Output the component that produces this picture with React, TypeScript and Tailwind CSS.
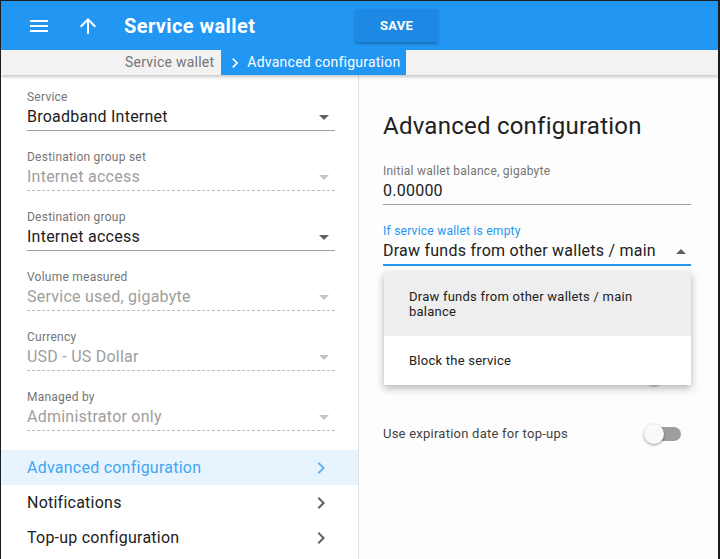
import React from "react";

const Caret = ({ up = false, color = "#757575" }: { up?: boolean; color?: string }) => (
  <svg width="10" height="5" viewBox="0 0 10 5" className="shrink-0">
    {up ? <path d="M0 5 L5 0 L10 5 Z" fill={color} /> : <path d="M0 0 L10 0 L5 5 Z" fill={color} />}
  </svg>
);

const Chevron = ({ color }: { color: string }) => (
  <svg width="24" height="24" viewBox="0 0 24 24" className="shrink-0">
    <path d="M8.59 16.59L13.17 12 8.59 7.41 10 6l6 6-6 6-1.41-1.41z" fill={color} />
  </svg>
);

type FieldProps = { label: string; value: string; disabled?: boolean };

const Field = ({ label, value, disabled }: FieldProps) => (
  <div className="mb-[19px]">
    <div className="h-[14px] text-[12px] leading-[14px] text-[#757575]">{label}</div>
    <div
      className={
        "mt-[3px] flex h-[20px] items-center justify-between pr-[6px] pb-[3px] box-content border-b " +
        (disabled ? "border-dashed border-[#bdbdbd]" : "border-solid border-[#9e9e9e]")
      }
    >
      <span className={"text-[16px] leading-[20px] " + (disabled ? "text-[#9e9e9e]" : "text-[#212121]")}>{value}</span>
      <Caret color={disabled ? "#c4c4c4" : "#616161"} />
    </div>
  </div>
);

const Toggle = () => (
  <div className="relative h-[20px] w-[38px] shrink-0">
    <div className="absolute left-[5px] top-[3px] h-[14px] w-[32px] rounded-full bg-[#9e9e9e]" />
    <div className="absolute left-0 top-0 h-[20px] w-[20px] rounded-full bg-[#fafafa] shadow-[0_1px_3px_rgba(0,0,0,0.4)]" />
  </div>
);

export default function App() {
  return (
    <div
      className="h-[559px] w-[720px] overflow-hidden bg-[#1c1d1f] pl-px pr-[2px] pt-px tracking-[0.015em]"
      style={{ fontFamily: "Roboto, 'Noto Sans', sans-serif" }}
    >
      <div className="flex h-full flex-col bg-white">
        {/* Header */}
        <div className="flex h-[49px] shrink-0 items-center bg-[#2196f3] pl-[26px]">
          <svg width="24" height="24" viewBox="0 0 24 24">
            <path d="M3 18h18v-2H3v2zm0-5h18v-2H3v2zm0-7v2h18V6H3z" fill="#fff" />
          </svg>
          <svg width="24" height="24" viewBox="0 0 24 24" className="ml-[25px]">
            <path d="M4 12l1.41 1.41L11 7.83V20h2V7.83l5.58 5.59L20 12l-8-8-8 8z" fill="#fff" />
          </svg>
          <div className="ml-[24px] w-[231px] text-[20px] font-bold leading-[24px] tracking-[0.02em] text-white">Service wallet</div>
          <button className="flex h-[33px] w-[83px] items-center justify-center rounded-[2px] bg-[#1e88e5] text-[13px] font-bold tracking-[0.3px] text-white shadow-[0_2px_3px_rgba(0,0,0,0.25)]">
            SAVE
          </button>
        </div>

        {/* Breadcrumb */}
        <div className="relative z-10 flex h-[25px] shrink-0 items-stretch bg-[#f2f2f2] pl-[124px] shadow-[0_2px_3px_rgba(0,0,0,0.22)]">
          <span className="flex items-center text-[14px] text-[#757575]">Service wallet</span>
          <div className="ml-[7px] flex items-center bg-[#2196f3] pl-[4px] pr-[6px] text-[14px] text-white">
            <svg width="20" height="20" viewBox="0 0 24 24">
              <path d="M8.59 16.59L13.17 12 8.59 7.41 10 6l6 6-6 6-1.41-1.41z" fill="#fff" />
            </svg>
            <span className="ml-[2px]">Advanced configuration</span>
          </div>
        </div>

        {/* Main */}
        <div className="flex min-h-0 flex-1">
          {/* Left */}
          <div className="w-[358px] shrink-0 border-r border-[#e0e0e0] pt-[15px]">
            <div className="pl-[26px] pr-[23px]">
              <Field label="Service" value="Broadband Internet" />
              <Field label="Destination group set" value="Internet access" disabled />
              <Field label="Destination group" value="Internet access" />
              <Field label="Volume measured" value="Service used, gigabyte" disabled />
              <Field label="Currency" value="USD - US Dollar" disabled />
              <Field label="Managed by" value="Administrator only" disabled />
            </div>
            <div>
              <div className="flex h-[35px] items-center justify-between bg-[#e8f4fd] pl-[26px] pr-[25px]">
                <span className="text-[16px] text-[#42a5f5]">Advanced configuration</span>
                <Chevron color="#64b5f6" />
              </div>
              <div className="flex h-[35px] items-center justify-between pl-[26px] pr-[25px]">
                <span className="text-[16px] text-[#212121]">Notifications</span>
                <Chevron color="#616161" />
              </div>
              <div className="flex h-[35px] items-center justify-between pl-[26px] pr-[25px]">
                <span className="text-[16px] text-[#212121]">Top-up configuration</span>
                <Chevron color="#616161" />
              </div>
            </div>
          </div>

          {/* Right */}
          <div className="relative flex-1 bg-[#fdfdfd] pl-[24px] pr-[27px] pt-[35px]">
            <h1 className="h-[32px] text-[24px] font-normal leading-[32px] text-[#212121]">Advanced configuration</h1>
            <div className="mt-[22px]">
              <div className="mb-[19px]">
                <div className="h-[14px] text-[12px] leading-[14px] text-[#757575]">Initial wallet balance, gigabyte</div>
                <div className="mt-[3px] box-content h-[20px] border-b border-[#9e9e9e] pb-[3px] text-[16px] leading-[20px] text-[#212121]">
                  0.00000
                </div>
              </div>
              <div>
                <div className="h-[14px] text-[12px] leading-[14px] text-[#2196f3]">If service wallet is empty</div>
                <div className="mt-[3px] box-content flex h-[20px] items-center justify-between border-b-2 border-[#2196f3] pb-[3px] pr-[5px]">
                  <span className="text-[16px] leading-[20px] text-[#212121]">Draw funds from other wallets / main</span>
                  <Caret up color="#616161" />
                </div>
              </div>
            </div>

            <div className="mt-[99px] flex h-[20px] items-center justify-end pr-[9px]">
              <Toggle />
            </div>
            <div className="mt-[39px] flex h-[20px] items-center justify-between pr-[9px]">
              <span className="text-[13px] text-[#424242]">Use expiration date for top-ups</span>
              <Toggle />
            </div>

            {/* Dropdown menu */}
            <div className="absolute left-[25px] top-[197px] z-20 w-[307px] bg-white shadow-[0_3px_8px_rgba(0,0,0,0.3)]">
              <div className="flex h-[64px] flex-col justify-center bg-[#eeeeee] pl-[25px] pr-[20px] text-[13px] leading-[15px] text-[#212121]">
                <span>Draw funds from other wallets / main</span>
                <span>balance</span>
              </div>
              <div className="flex h-[49px] items-center pl-[25px] text-[13px] text-[#212121]">Block the service</div>
            </div>
          </div>
        </div>
      </div>
    </div>
  );
}
